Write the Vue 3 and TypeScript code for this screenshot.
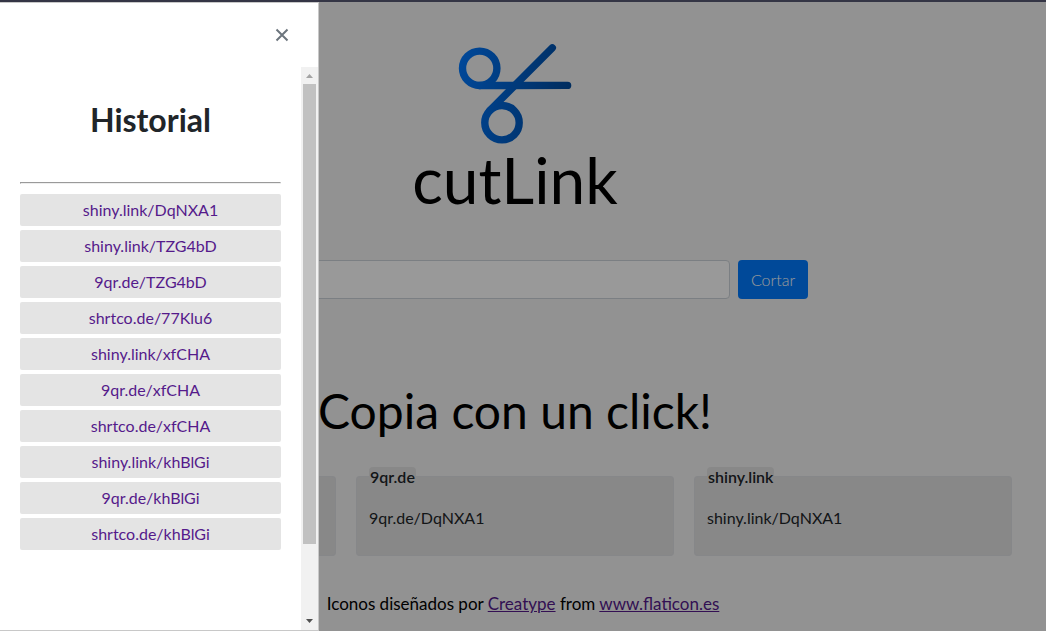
<script setup lang="ts">
import { ref } from 'vue'

interface ShortLink {
  domain: string
  url: string
}

const address = ref('')
const drawerOpen = ref(true)

const results: ShortLink[] = [
  { domain: 'shrtco.de', url: 'shrtco.de/DqNXA1' },
  { domain: '9qr.de', url: '9qr.de/DqNXA1' },
  { domain: 'shiny.link', url: 'shiny.link/DqNXA1' },
]

const history: string[] = [
  'shiny.link/DqNXA1',
  'shiny.link/TZG4bD',
  '9qr.de/TZG4bD',
  'shrtco.de/77Klu6',
  'shiny.link/xfCHA',
  '9qr.de/xfCHA',
  'shrtco.de/xfCHA',
  'shiny.link/khBlGi',
  '9qr.de/khBlGi',
  'shrtco.de/khBlGi',
]
</script>

<template>
  <div class="page">
    <main class="content">
      <header class="brand">
        <svg class="logo" viewBox="0 0 114 104" aria-hidden="true">
          <defs>
            <linearGradient id="blade" gradientUnits="userSpaceOnUse" x1="0" y1="30" x2="114" y2="50">
              <stop offset="0" stop-color="#0078ff" />
              <stop offset="1" stop-color="#004a9c" />
            </linearGradient>
          </defs>
          <g fill="none" stroke="url(#blade)" stroke-width="7.4" stroke-linecap="round" stroke-linejoin="round">
            <circle cx="21.7" cy="28.3" r="17.2" />
            <circle cx="44" cy="82.7" r="17.2" />
            <path d="M21.7 45.5L109.6 45.4" />
            <path d="M94.3 7.8L31.8 70.5" />
          </g>
        </svg>
        <h1>cutLink</h1>
      </header>

      <form class="cutter" @submit.prevent>
        <input v-model="address" type="text" aria-label="Enlace" />
        <button type="submit">Cortar</button>
      </form>

      <h2>Copia con un click!</h2>

      <div class="results">
        <fieldset v-for="item in results" :key="item.domain">
          <legend>{{ item.domain }}</legend>
          <p>{{ item.url }}</p>
        </fieldset>
      </div>

      <footer>
        Iconos diseñados por <a href="#creatype">Creatype</a> from
        <a href="#flaticon">www.flaticon.es</a>
      </footer>
    </main>

    <div v-if="drawerOpen" class="mask"></div>

    <aside v-if="drawerOpen" class="drawer" aria-label="Historial">
      <div class="drawer-head">
        <button type="button" aria-label="Cerrar" @click="drawerOpen = false">
          <svg viewBox="0 0 14 14" aria-hidden="true">
            <path d="M1.5 1.5L12.5 12.5M12.5 1.5L1.5 12.5" />
          </svg>
        </button>
      </div>
      <div class="drawer-body">
        <div class="history">
          <h2>Historial</h2>
          <hr />
          <ul>
            <li v-for="link in history" :key="link">
              <a :href="'#' + link">{{ link }}</a>
            </li>
          </ul>
        </div>
        <div class="scrollbar" aria-hidden="true">
          <svg viewBox="0 0 17 17"><path d="M5 11L8.5 7L12 11Z" fill="#a3a3a3" /></svg>
          <div class="track"><div class="thumb"></div></div>
          <svg viewBox="0 0 17 17"><path d="M5 6L12 6L8.5 10Z" fill="#505050" /></svg>
        </div>
      </div>
    </aside>
  </div>
</template>

<style>
body {
  margin: 0;
  background: #f3f3f3;
}
</style>

<style scoped>
.page {
  box-sizing: border-box;
  min-height: 100vh;
  border-top: 2px solid #343545;
  background: #f3f3f3;
  color: #000;
  font-family: Lato, "Open Sans", sans-serif;
  font-size: 16px;
  line-height: 24px;
}

.content {
  display: flex;
  flex-direction: column;
  padding: 38px 34px 0 18px;
}

.brand {
  display: flex;
  flex-direction: column;
  align-items: center;
}

.logo {
  display: block;
  width: 114px;
  height: 104px;
}

h1,
h2 {
  margin: 0;
  font-weight: 400;
}

h1 {
  font-size: 64px;
  line-height: 72px;
}

.cutter {
  display: flex;
  gap: 8px;
  box-sizing: border-box;
  width: 100%;
  max-width: 586px;
  margin: 44px auto 0;
}

.cutter input {
  flex: 1;
  box-sizing: border-box;
  min-width: 0;
  height: 39px;
  padding: 6px 12px;
  border: 1px solid #ced4da;
  border-radius: 4px;
  background: #fff;
  font: inherit;
}

.cutter button {
  width: 70px;
  padding: 0;
  border: 0;
  border-radius: 4px;
  background: #007bff;
  color: #fff;
  font: inherit;
  font-weight: 300;
}

.content > h2 {
  margin-top: 82px;
  font-size: 48px;
  line-height: 60px;
  text-align: center;
}

.results {
  display: grid;
  grid-template-columns: repeat(3, 1fr);
  gap: 20px;
  margin-top: 26px;
}

fieldset {
  box-sizing: border-box;
  min-width: 0;
  height: 89px;
  margin: 0;
  padding: 0 12px;
  border: 1px solid #e0e2e5;
  border-radius: 4px;
  background: #e3e3e3;
  color: #212529;
}

legend {
  padding: 0 1px;
  border-radius: 4px;
  background: #e3e3e3;
  font-weight: 600;
  line-height: 19px;
}

fieldset p {
  margin: 20px 0 0;
}

footer {
  margin-top: 36px;
  padding-left: 16px;
  font-size: 17px;
  text-align: center;
}

a {
  color: #551a8b;
}

.mask {
  position: fixed;
  inset: 2px 0 0;
  background: rgba(0, 0, 0, 0.4);
}

.drawer {
  position: fixed;
  top: 2px;
  bottom: 0;
  left: 0;
  display: flex;
  flex-direction: column;
  box-sizing: border-box;
  width: 319px;
  border: 1px solid #c8c8c8;
  border-left: 0;
  background: #fff;
  color: #212529;
}

.drawer-head {
  display: flex;
  justify-content: flex-end;
  padding: 16px 20px;
}

.drawer-head button {
  display: grid;
  place-items: center;
  width: 32px;
  height: 32px;
  padding: 0;
  border: 0;
  background: none;
}

.drawer-head svg {
  width: 14px;
  height: 14px;
  fill: none;
  stroke: #6c757d;
  stroke-width: 2;
}

.drawer-body {
  display: flex;
  flex: 1;
  min-height: 0;
}

.history {
  flex: 1;
  overflow: hidden;
  padding: 0 20px;
  text-align: center;
}

.history h2 {
  margin: 32px 0 41px;
  font-size: 32px;
  font-weight: 700;
  line-height: 42px;
}

.history hr {
  margin: 0 0 10px;
  border: 1px inset #eee;
}

.history ul {
  display: flex;
  flex-direction: column;
  gap: 4px;
  margin: 0;
  padding: 0;
  list-style: none;
}

.history li {
  border-radius: 2px;
  background: #e4e4e4;
  line-height: 32px;
}

.history li a {
  text-decoration: none;
}

.scrollbar {
  display: flex;
  flex-direction: column;
  width: 17px;
  background: #f1f1f1;
}

.scrollbar svg {
  display: block;
  width: 17px;
  height: 17px;
}

.track {
  flex: 1;
  padding: 0 2px;
}

.thumb {
  height: 87%;
  background: #c1c1c1;
}
</style>
